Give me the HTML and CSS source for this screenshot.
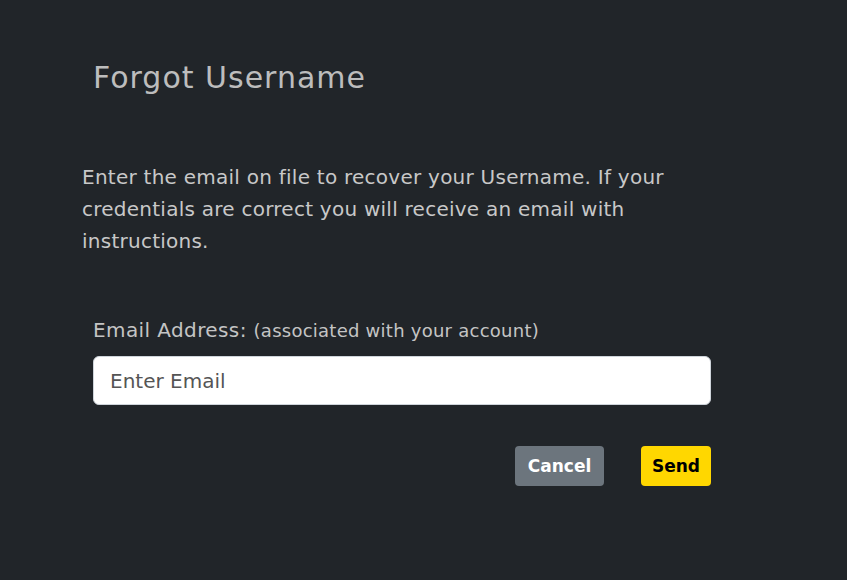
FILE: index.html
```html
<!DOCTYPE html>
<html lang="en">
<head>
<meta charset="utf-8">
<title>Forgot Username</title>
<link rel="stylesheet" href="styles.css">
</head>
<body>
<main class="page">
  <h1 class="title">Forgot Username</h1>
  <p class="intro">Enter the email on file to recover your Username. If your credentials are correct you will receive an email with instructions.</p>
  <form class="form">
    <label class="label" for="email">Email Address: <span class="hint">(associated with your account)</span></label>
    <input class="input" id="email" type="email" placeholder="Enter Email">
    <div class="actions">
      <button type="button" class="btn btn-cancel">Cancel</button>
      <button type="submit" class="btn btn-send">Send</button>
    </div>
  </form>
</main>
</body>
</html>
```
FILE: styles.css
```css
html, body {
  margin: 0;
  padding: 0;
  background: #212529;
  height: 100%;
}
body {
  font-family: "DejaVu Sans", "Noto Sans", sans-serif;
  color: #c4c4c4;
}
.page {
  padding: 58px 0 0 82px;
  width: 610px;
}
.title {
  margin: 0 0 0 11px;
  font-size: 30px;
  font-weight: 400;
  letter-spacing: 1px;
  line-height: 40px;
  color: #bdbdbd;
}
.intro {
  margin: 63px 0 0 0;
  font-size: 20px;
  letter-spacing: 0.25px;
  line-height: 32px;
  color: #c8c8c8;
}
.form {
  margin: 60px 0 0 11px;
  display: flex;
  flex-direction: column;
}
.label {
  font-size: 20px;
  letter-spacing: 0.4px;
  line-height: 26px;
  color: #c4c4c4;
}
.hint {
  font-size: 18px;
  letter-spacing: 0.25px;
}
.input {
  margin-top: 12px;
  box-sizing: border-box;
  height: 49px;
  width: 618px;
  border: 1px solid #ced4da;
  border-radius: 6px;
  background: #fff;
  padding: 0 16px;
  font-family: inherit;
  font-size: 20px;
  color: #333;
  outline: none;
}
.input::placeholder {
  color: #555;
}
.actions {
  margin-top: 41px;
  display: flex;
  justify-content: flex-end;
  gap: 37px;
  width: 618px;
}
.btn {
  height: 40px;
  border: none;
  border-radius: 4px;
  font-family: inherit;
  font-size: 17px;
  font-weight: 700;
  padding: 0;
  cursor: pointer;
}
.btn-cancel {
  background: #6c757d;
  color: #fff;
  width: 89px;
}
.btn-send {
  background: #ffd700;
  color: #000;
  width: 70px;
}
```
